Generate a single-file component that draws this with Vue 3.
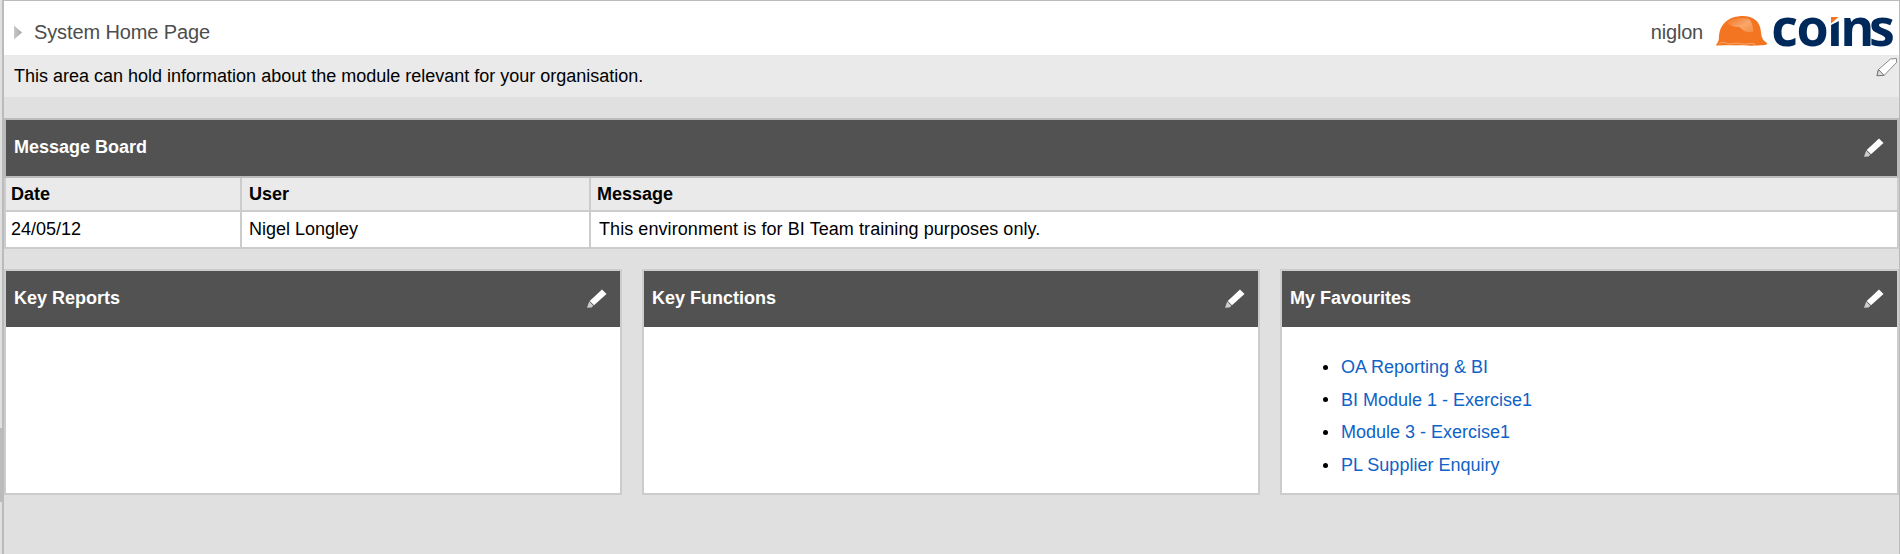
<script setup>
const panels = [
  { title: 'Key Reports', links: [] },
  { title: 'Key Functions', links: [] },
  {
    title: 'My Favourites',
    links: ['OA Reporting & BI', 'BI Module 1 - Exercise1', 'Module 3 - Exercise1', 'PL Supplier Enquiry'],
  },
]
</script>

<template>
  <div class="frame">
    <div class="rail"><div class="handle"></div></div>
    <main class="page">
      <header class="top">
        <svg class="arrow" width="9" height="16" viewBox="0 0 9 16">
          <defs>
            <linearGradient id="arrowFill" x1="0" y1="0" x2="1" y2="0">
              <stop offset="0" stop-color="#c9c9c9" />
              <stop offset="1" stop-color="#a6a6a6" />
            </linearGradient>
          </defs>
          <path d="M0 0.500 8 7.500 0 14.500Z" fill="url(#arrowFill)" />
        </svg>
        <h1 class="title">System Home Page</h1>
        <span class="user">niglon</span>
        <svg class="logo" width="180" height="38" viewBox="1714 11 180 38">
          <defs>
            <linearGradient id="shine" x1="0" y1="0" x2="1" y2="1">
              <stop offset="0.1" stop-color="#f47a2a" />
              <stop offset="0.55" stop-color="#f9a76c" />
              <stop offset="1" stop-color="#f68a40" />
            </linearGradient>
          </defs>
          <path d="M1716 45.500C1716.500 43 1718.500 42.500 1718.800 39.500C1719 31 1721 26 1725.500 22C1729.500 18 1736 16 1743 16C1753 16.500 1758.500 20.500 1760.300 28C1761.300 32 1761 36.500 1763 39.500C1764.500 41.500 1766.500 42 1767.500 44C1765 46 1757 45 1752 45.800C1742 45 1728 45 1716 45.500Z" fill="#f47521" />
          <path d="M1727 22.500C1732 17.800 1742 17 1749 19C1752.500 22 1753 28 1753.500 31.500C1748 33.500 1744 31.500 1739.500 27C1735 27.500 1731 26 1727 22.500Z" fill="url(#shine)" />
          <path d="M1719 43.800Q1723 40.800 1728 44Q1737 42 1745 44.300Q1750 42.500 1755 44" fill="none" stroke="#f9a468" stroke-width="1" />
          <text class="wordmark" x="1771.200 1796.600 1827 1840.300 1869" y="45.500">coıns</text>
          <path d="M1829 15H1840V20.500L1829 26Z" fill="#fff" />
          <path d="M1831 17H1838.500L1831 23.500Z" fill="#f47521" />
        </svg>
      </header>

      <section class="info">
        <span>This area can hold information about the module relevant for your organisation.</span>
        <svg class="pencil-outline" width="22" height="20" viewBox="0 0 22 20">
          <path d="M1 18.500 2.500 12.500 14.500 2 20.500 1.500 20.500 5.500 8 18.500Z" fill="#fff" stroke="#8a8a8a" stroke-width="1" />
          <path d="M1 18.800 2.500 12.500 8 18.300Z" fill="#ddd" stroke="#777" />
        </svg>
      </section>

      <section class="board">
        <div class="head">
          <h2>Message Board</h2>
          <svg class="pencil" width="22" height="20" viewBox="0 0 22 20">
            <path d="M16 0.500 20.500 5 8 16.300 3.700 12Z" fill="#fff" />
            <path d="M3.200 12.400 7.400 16.700 5.500 18.500 1 18.700Z" fill="#ccc" />
          </svg>
        </div>
        <div class="row labels"><div>Date</div><div>User</div><div>Message</div></div>
        <div class="row values"><div>24/05/12</div><div>Nigel Longley</div><div class="message">This environment is for BI Team training purposes only.</div></div>
      </section>

      <div class="panels">
        <section v-for="p in panels" :key="p.title" class="panel">
          <div class="head">
            <h2>{{ p.title }}</h2>
            <svg class="pencil" width="22" height="20" viewBox="0 0 22 20">
              <path d="M16 0.500 20.500 5 8 16.300 3.700 12Z" fill="#fff" />
              <path d="M3.200 12.400 7.400 16.700 5.500 18.500 1 18.700Z" fill="#ccc" />
            </svg>
          </div>
          <ul v-if="p.links.length" class="links">
            <li v-for="l in p.links" :key="l"><a>{{ l }}</a></li>
          </ul>
        </section>
      </div>
    </main>
  </div>
</template>

<style scoped>
.frame {
  display: flex;
  box-sizing: border-box;
  width: 1900px;
  height: 554px;
  background: #e0e0e0;
  font-family: "Liberation Sans", Arial, sans-serif;
  font-size: 18px;
  color: #000;
}
.rail {
  flex: none;
  box-sizing: border-box;
  width: 4px;
  border-right: 2px solid #bbb;
  padding-top: 428px;
}
.handle { width: 2px; height: 74px; background: #bbb; }
.page {
  flex: 1;
  min-width: 0;
  box-sizing: border-box;
  border-top: 1px solid #bbb;
  border-right: 1px solid #bbb;
}
.top {
  display: flex;
  align-items: center;
  height: 54px;
  padding: 0 5px 0 10px;
  background: #fff;
  color: #4d4d4d;
  font-size: 20px;
}
.arrow { margin-top: 9px; }
.title { margin: 8px 0 0 11px; font-size: 20px; font-weight: 400; letter-spacing: -0.12px; }
.user { margin: 8px 11px 0 auto; letter-spacing: -0.2px; }
.logo { flex: none; margin-top: 4px; overflow: visible; }
.wordmark {
  font-family: "Open Sans", "Noto Sans", sans-serif;
  font-size: 52px;
  font-weight: 700;
  fill: #00295b;
}
.info {
  display: flex;
  justify-content: space-between;
  box-sizing: border-box;
  height: 42px;
  padding: 0 1px 0 10px;
  background: #eaeaea;
  line-height: 43px;
}
.pencil-outline { margin-top: 2px; }
.board { margin-top: 21px; border: 2px solid #bbb; border-width: 2px 2px 0; }
.head {
  display: flex;
  align-items: center;
  justify-content: space-between;
  height: 56px;
  padding: 0 12px 0 8px;
  background: #525252;
  color: #fff;
}
.head h2 { margin: 0; font-size: 18px; font-weight: 700; height: 56px; line-height: 54px; }
.row {
  display: grid;
  grid-template-columns: 234px 347px 1fr;
  column-gap: 2px;
  margin: 0 -2px;
  padding: 0 2px;
  background: #ccc;
  border-bottom: 2px solid #ccc;
}
.labels { border-top: 2px solid #bbb; font-weight: 700; line-height: 33px; }
.labels > div { height: 32px; background: #eaeaea; padding-left: 5px; }
.values { line-height: 35px; }
.values > div { height: 35px; background: #fff; padding-left: 5px; }
.row > div:nth-child(2) { padding-left: 7px; }
.row > div:nth-child(3) { padding-left: 6px; }
.values > .message:nth-child(3) { padding-left: 8px; letter-spacing: 0.07px; }
.panels {
  display: grid;
  grid-template-columns: 618px 618px 1fr;
  gap: 20px;
  margin-top: 20px;
}
.panel {
  box-sizing: border-box;
  height: 226px;
  border: 2px solid #ccc;
  background: #fff;
}
.links { margin: 0; padding: 24px 0 0 59px; line-height: 32.600px; list-style: none; }
.links li { display: flex; align-items: center; }
.links li::before { content: ""; width: 5px; height: 5px; margin: 0 13px 0 -18px; border-radius: 50%; background: #000; }
.links a { color: #0f62c6; }
</style>
